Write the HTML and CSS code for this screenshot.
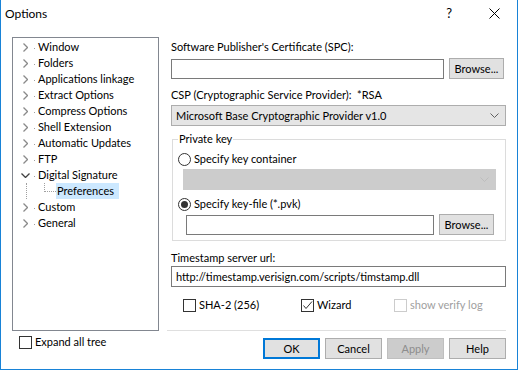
FILE: index.html
```html
<!DOCTYPE html>
<html>
<head>
    <meta charset="utf-8">
    <title>Options</title>
    <link rel="stylesheet" href="styles.css">
</head>
<body>

<div class="window">

    <div class="titlebar">
        <span class="title">Options</span>
        <span class="help_btn">?</span>
        <span class="close_btn">
            <svg width="11" height="11" viewBox="0 0 11 11"><path d="M0.5 0.5L10.5 10.5M10.5 0.5L0.5 10.5" stroke="#000" stroke-width="1"/></svg>
        </span>
    </div>

    <div class="main">

        <div class="tree">
            <div class="tree_row"><span class="twisty"><svg width="5" height="9" viewBox="0 0 5 9"><path d="M0.5 0.5L4.5 4.5L0.5 8.5" class="chev"/></svg></span><span class="dot"></span><span class="tree_text">Window</span></div>
            <div class="tree_row"><span class="twisty"><svg width="5" height="9" viewBox="0 0 5 9"><path d="M0.5 0.5L4.5 4.5L0.5 8.5" class="chev"/></svg></span><span class="dot"></span><span class="tree_text">Folders</span></div>
            <div class="tree_row"><span class="twisty"><svg width="5" height="9" viewBox="0 0 5 9"><path d="M0.5 0.5L4.5 4.5L0.5 8.5" class="chev"/></svg></span><span class="dot"></span><span class="tree_text">Applications linkage</span></div>
            <div class="tree_row"><span class="twisty"><svg width="5" height="9" viewBox="0 0 5 9"><path d="M0.5 0.5L4.5 4.5L0.5 8.5" class="chev"/></svg></span><span class="dot"></span><span class="tree_text">Extract Options</span></div>
            <div class="tree_row"><span class="twisty"><svg width="5" height="9" viewBox="0 0 5 9"><path d="M0.5 0.5L4.5 4.5L0.5 8.5" class="chev"/></svg></span><span class="dot"></span><span class="tree_text">Compress Options</span></div>
            <div class="tree_row"><span class="twisty"><svg width="5" height="9" viewBox="0 0 5 9"><path d="M0.5 0.5L4.5 4.5L0.5 8.5" class="chev"/></svg></span><span class="dot"></span><span class="tree_text">Shell Extension</span></div>
            <div class="tree_row"><span class="twisty"><svg width="5" height="9" viewBox="0 0 5 9"><path d="M0.5 0.5L4.5 4.5L0.5 8.5" class="chev"/></svg></span><span class="dot"></span><span class="tree_text">Automatic Updates</span></div>
            <div class="tree_row"><span class="twisty"><svg width="5" height="9" viewBox="0 0 5 9"><path d="M0.5 0.5L4.5 4.5L0.5 8.5" class="chev"/></svg></span><span class="dot"></span><span class="tree_text">FTP</span></div>
            <div class="tree_row"><span class="twisty"><svg width="9" height="5" viewBox="0 0 9 5"><path d="M0.5 0.5L4.5 4.5L8.5 0.5" class="chev chev--open"/></svg></span><span class="dot"></span><span class="tree_text">Digital Signature</span></div>
            <div class="tree_row tree_row--child"><span class="tree_line"></span><span class="tree_branch"></span><span class="tree_text tree_text--selected">Preferences</span></div>
            <div class="tree_row"><span class="twisty"><svg width="5" height="9" viewBox="0 0 5 9"><path d="M0.5 0.5L4.5 4.5L0.5 8.5" class="chev"/></svg></span><span class="dot"></span><span class="tree_text">Custom</span></div>
            <div class="tree_row"><span class="twisty"><svg width="5" height="9" viewBox="0 0 5 9"><path d="M0.5 0.5L4.5 4.5L0.5 8.5" class="chev"/></svg></span><span class="dot"></span><span class="tree_text">General</span></div>
        </div>

        <div class="panel">
            <div class="label label--spc">Software Publisher's Certificate (SPC):</div>
            <div class="file_row">
                <div class="field field--spc"></div>
                <button class="nice_button">Browse...</button>
            </div>

            <div class="label label--csp">CSP (Cryptographic Service Provider):&nbsp; *RSA</div>
            <div class="combo">
                <span>Microsoft Base Cryptographic Provider v1.0</span>
                <svg width="9" height="5" viewBox="0 0 9 5"><path d="M0.5 0.5L4.5 4.5L8.5 0.5" class="arrow"/></svg>
            </div>

            <fieldset class="group">
                <legend class="group_title">Private key</legend>
                <div class="option">
                    <span class="radio"></span>
                    <span>Specify key container</span>
                </div>
                <div class="combo combo--disabled">
                    <span></span>
                    <svg width="9" height="5" viewBox="0 0 9 5"><path d="M0.5 0.5L4.5 4.5L8.5 0.5" class="arrow arrow--disabled"/></svg>
                </div>
                <div class="option option--second">
                    <span class="radio radio--checked"></span>
                    <span>Specify key-file (*.pvk)</span>
                </div>
                <div class="file_row file_row--key">
                    <div class="field field--key"></div>
                    <button class="nice_button">Browse...</button>
                </div>
            </fieldset>

            <div class="label label--ts">Timestamp server url:</div>
            <div class="field field--ts">http://timestamp.verisign.com/scripts/timstamp.dll</div>

            <div class="check_row">
                <div class="check check--sha"><span class="box"></span><span>SHA-2 (256)</span></div>
                <div class="check check--wiz">
                    <span class="box"><svg width="11" height="11" viewBox="0 0 11 11"><path d="M1.5 5.5L4 8.5L10 1.5" class="tick"/></svg></span>
                    <span>Wizard</span>
                </div>
                <div class="check check--off"><span class="box"></span><span>show verify log</span></div>
            </div>

            <div class="separator"></div>
        </div>

    </div>

    <div class="footer">
        <div class="check check--expand"><span class="box"></span><span>Expand all tree</span></div>
        <div class="buttons">
            <button class="nice_button nice_button--default">OK</button>
            <button class="nice_button">Cancel</button>
            <button class="nice_button nice_button--disabled">Apply</button>
            <button class="nice_button">Help</button>
        </div>
    </div>

</div>

</body>
</html>
```

FILE: styles.css
```css
body {
    margin: 0;
    font-family: Lato, "Noto Sans", sans-serif;
    font-size: 11px;
    color: #000;
    background: #fff;
}

.window {
    width: 518px;
    height: 370px;
    box-sizing: border-box;
    border: 1px solid #1883d7;
    border-top: none;
    display: flex;
    flex-direction: column;
}

.titlebar {
    height: 26px;
    display: flex;
    align-items: center;
    padding: 0 17px 0 4px;
    font-size: 12px;
}

.title {
    flex: 1;
}

.help_btn {
    margin-right: 37px;
    font-size: 13px;
}

.close_btn {
    display: flex;
}

.main {
    display: grid;
    grid-template-columns: 147px 335px;
    column-gap: 12px;
    padding: 11px 0 0 11px;
}

/* tree */

.tree {
    height: 294px;
    box-sizing: border-box;
    border: 1px solid #828790;
    padding-top: 1px;
}

.tree_row {
    display: flex;
    align-items: center;
    height: 16px;
    line-height: 16px;
    padding-left: 8px;
}

.twisty {
    width: 9px;
    height: 16px;
    display: flex;
    align-items: center;
    justify-content: center;
}

.chev {
    fill: none;
    stroke: #8a8a8a;
    stroke-width: 1.3;
}

.chev--open {
    stroke: #404040;
}

.dot {
    width: 1px;
    height: 1px;
    margin: 2px 0 0 4px;
    background: #a0a0a0;
}

.tree_text {
    margin-left: 3px;
    white-space: nowrap;
}

.tree_row--child {
    align-items: flex-start;
}

.tree_line {
    height: 16px;
    margin-left: 5px;
    border-left: 1px dotted #a0a0a0;
}

.tree_branch {
    width: 12px;
    height: 9px;
    margin-left: 17px;
    box-sizing: border-box;
    border-left: 1px dotted #a0a0a0;
    border-bottom: 1px dotted #a0a0a0;
}

.tree_text--selected {
    width: 62px;
    margin-left: 0;
    padding-left: 1px;
    background: #cce8ff;
}

/* right panel */

.panel {
    display: flex;
    flex-direction: column;
    height: 294px;
}

.label {
    line-height: 16px;
    white-space: nowrap;
}

.label--spc {
    margin-top: 2px;
}

.label--csp {
    margin-top: 8px;
}

.label--ts {
    margin-top: 9px;
}

.file_row {
    display: flex;
    align-items: flex-start;
    gap: 5px;
    margin-top: 3px;
}

.file_row--key {
    margin: 2px 0 0 8px;
}

.field {
    box-sizing: border-box;
    height: 20px;
    margin-top: 1px;
    border: 1px solid #7a7a7a;
    background: #fff;
}

.field--spc {
    width: 273px;
}

.field--key {
    width: 248px;
}

.field--ts {
    height: 21px;
    margin-top: 0;
    padding-left: 4px;
    line-height: 19px;
    white-space: nowrap;
}

.nice_button {
    box-sizing: border-box;
    width: 55px;
    height: 21px;
    padding: 0;
    border: 1px solid #adadad;
    background: #e1e1e1;
    font: inherit;
    line-height: 19px;
    color: #000;
    text-align: center;
}

.nice_button--default {
    border: 2px solid #0078d7;
    line-height: 17px;
}

.nice_button--disabled {
    background: #cccccc;
    border-color: #bfbfbf;
    color: #8d8d8d;
}

.combo {
    box-sizing: border-box;
    height: 21px;
    margin-top: 2px;
    padding: 0 6px 0 4px;
    border: 1px solid #adadad;
    background: #e5e5e5;
    display: flex;
    align-items: center;
    justify-content: space-between;
    white-space: nowrap;
}

.arrow {
    fill: none;
    stroke: #606060;
    stroke-width: 1;
}

.arrow--disabled {
    stroke: #bdbdbd;
}

.combo--disabled {
    width: 313px;
    margin: 2px 0 0 5px;
    background: #cccccc;
    border-color: #cccccc;
}

.group {
    margin: 5px 0 0 1px;
    padding: 4px 9px 5px 5px;
    border: 1px solid #dcdcdc;
    min-width: 0;
}

.group_title {
    padding: 0 1px;
    line-height: 16px;
}

.option {
    display: flex;
    align-items: center;
    gap: 3px;
    height: 16px;
    line-height: 16px;
}

.option--second {
    margin-top: 6px;
}

.radio {
    width: 13px;
    height: 13px;
    box-sizing: border-box;
    border: 1px solid #333;
    border-radius: 50%;
    background: #fff;
    display: flex;
    align-items: center;
    justify-content: center;
}

.radio--checked::after {
    content: "";
    width: 7px;
    height: 7px;
    border-radius: 50%;
    background: #333;
}

.check_row {
    display: flex;
    margin-top: 10px;
    padding-left: 12px;
}

.check {
    display: flex;
    align-items: center;
    gap: 3px;
    height: 16px;
    line-height: 16px;
    white-space: nowrap;
}

.check--sha {
    width: 118px;
}

.check--wiz {
    width: 93px;
}

.check--off {
    color: #a0a0a0;
}

.check--off .box {
    border-color: #cccccc;
}

.box {
    width: 13px;
    height: 13px;
    box-sizing: border-box;
    border: 1px solid #333;
    background: #fff;
    display: flex;
    align-items: center;
    justify-content: center;
}

.tick {
    fill: none;
    stroke: #333;
    stroke-width: 1;
}

.separator {
    height: 1px;
    margin: auto 0 0 -4px;
    background: #dfdfdf;
}

/* footer */

.footer {
    display: flex;
    align-items: flex-start;
    padding: 0 11px 0 18px;
}

.check--expand {
    margin-top: 3px;
}

.buttons {
    display: flex;
    gap: 5px;
    margin: 7px 0 0 auto;
}

.buttons .nice_button {
    width: 57px;
}
```
